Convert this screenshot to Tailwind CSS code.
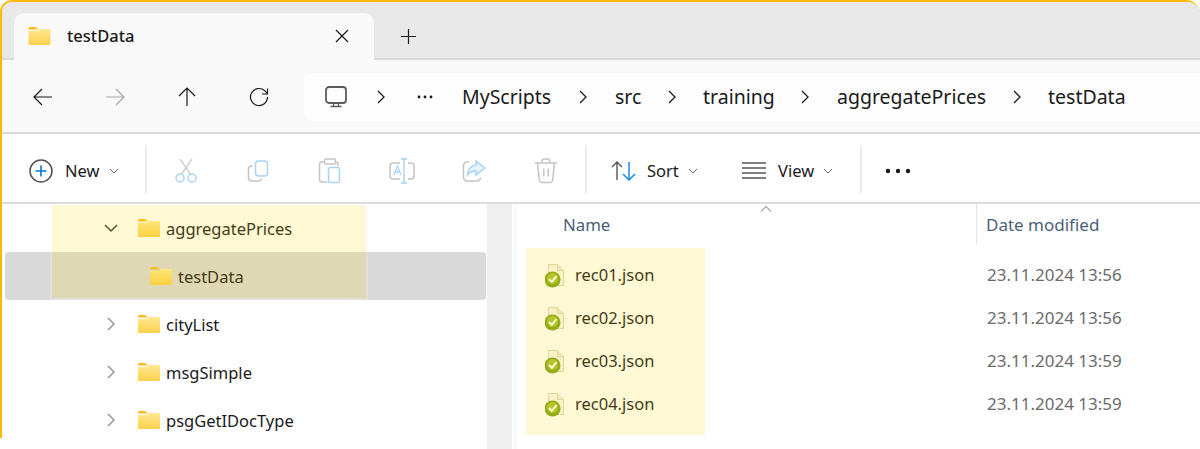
<!DOCTYPE html>
<html lang="en">
<head>
    <meta charset="UTF-8">
    <title>testData</title>
    <script src="https://cdn.jsdelivr.net/npm/@tailwindcss/browser@4"></script>
</head>
<body class="bg-white h-[449px] overflow-hidden font-['Noto_Sans',sans-serif] text-[#1a1a1a]">

    <!-- shared icons -->
    <svg class="absolute w-0 h-0">
        <defs>
            <linearGradient id="folderFill" x1="0" y1="0" x2="0" y2="1">
                <stop offset="0" stop-color="#fee98f"/>
                <stop offset="1" stop-color="#fdcf4c"/>
            </linearGradient>
        </defs>
        <symbol id="folder" viewBox="0 0 22 18">
            <path d="M0 1.500A1.500 1.500 0 0 1 1.500 0H7l3 2.500H0z" fill="#fbb91f"/>
            <path d="M0 4h9l2-2h10a1 1 0 0 1 1 1v14a1 1 0 0 1-1 1H1a1 1 0 0 1-1-1z" fill="url(#folderFill)"/>
        </symbol>
        <symbol id="jsonFile" viewBox="0 0 22 24">
            <path d="M3.500 0.500h9l6 6v15h-15z" fill="#f8f6ea" stroke="#dbd6be"/>
            <path d="M12.500 0.500v6h6" fill="#efebd8" stroke="#dbd6be"/>
            <circle cx="7.500" cy="15.500" r="8" fill="#7fa51a"/>
            <circle cx="7.500" cy="14.500" r="5.500" fill="#a3c233"/>
            <path d="M4 15l2.800 2.800 4.700-5.600" fill="none" stroke="#fff" stroke-width="2"/>
        </symbol>
        <symbol id="chevRight" viewBox="0 0 10 16">
            <path d="M2 2l6 6-6 6" fill="none" stroke="currentColor" stroke-width="1.300"/>
        </symbol>
        <symbol id="chevSmall" viewBox="0 0 10 6">
            <path d="M1 1l4 4 4-4" fill="none" stroke="currentColor" stroke-width="1"/>
        </symbol>
    </svg>

    <div class="relative h-[438px] border-t-2 border-l-2 border-[#ffb900] rounded-tl-[12px] rounded-tr-[14px]">
        <div class="h-[447px]">

            <!-- Tab strip -->
            <div class="h-[58px] bg-[#e8e8e8] border-b-2 border-[#d9d9d9] rounded-tl-[10px] rounded-tr-[12px] pl-[12px] pt-[11px] flex">
                <div class="w-[360px] h-[47px] bg-[#f9f9f9] rounded-t-[10px] flex items-center pl-[14px] pb-[1px]">
                    <svg class="w-[23px] h-[18px]"><use href="#folder"/></svg>
                    <span class="ml-[16px] w-[68px] text-[16.500px] font-medium">testData</span>
                    <svg class="ml-[200px]" width="14" height="14" viewBox="0 0 14 14"><path d="M1 1l12 12M13 1L1 13" stroke="#1a1a1a" stroke-width="1.200"/></svg>
                </div>
                <div class="w-[68px] h-[47px] flex items-center justify-center">
                    <svg width="15" height="15" viewBox="0 0 15 15"><path d="M7.500 0v15M0 7.500h15" stroke="#1a1a1a" stroke-width="1.200"/></svg>
                </div>
            </div>

            <!-- Navigation bar -->
            <div class="h-[74px] pt-[1px] bg-[#f9f9f9] border-b-2 border-[#d9d9d9] pl-[5px] flex items-center">
                <div class="w-[72px] flex justify-center">
                    <svg width="20" height="18" viewBox="0 0 20 18"><path d="M1 9h18M9 1L1 9l8 8" fill="none" stroke="#1a1a1a" stroke-width="1.200"/></svg>
                </div>
                <div class="w-[72px] flex justify-center">
                    <svg width="20" height="18" viewBox="0 0 20 18"><path d="M1 9h18M11 1l8 8-8 8" fill="none" stroke="#a6a6a6" stroke-width="1.200"/></svg>
                </div>
                <div class="w-[72px] flex justify-center">
                    <svg width="18" height="19" viewBox="0 0 18 19"><path d="M9 19V1M1 9l8-8 8 8" fill="none" stroke="#1a1a1a" stroke-width="1.200"/></svg>
                </div>
                <div class="w-[72px] flex justify-center">
                    <svg width="20" height="20" viewBox="0 0 20 20"><path d="M18.500 10a8.500 8.500 0 1 1-2.800-6.300L18.500 6.500M18.500 1.500v5.500h-5.500" fill="none" stroke="#1a1a1a" stroke-width="1.200"/></svg>
                </div>
                <div class="ml-[9px] w-[896px] h-[48px] bg-[#fdfdfd] rounded-l-[8px] flex items-center text-[19.500px]">
                    <div class="w-[64px] flex justify-center">
                        <svg width="24" height="22" viewBox="0 0 24 22"><rect x="2" y="1" width="20" height="16" rx="3" fill="none" stroke="#5c5c5c" stroke-width="1.800"/><path d="M9.500 17v3.500M14.500 17v3.500M6.500 20.500h11" fill="none" stroke="#5c5c5c" stroke-width="1.300"/></svg>
                    </div>
                    <div class="w-[26px] flex justify-center"><svg class="w-[10px] h-[16px]"><use href="#chevRight"/></svg></div>
                    <div class="w-[62px] flex justify-center">
                        <svg width="16" height="4" viewBox="0 0 16 4"><circle cx="2" cy="2" r="1.400" fill="#1a1a1a"/><circle cx="8" cy="2" r="1.400" fill="#1a1a1a"/><circle cx="14" cy="2" r="1.400" fill="#1a1a1a"/></svg>
                    </div>
                    <div class="w-[114px] pl-[6px]">MyScripts</div>
                    <div class="w-[26px] flex justify-center"><svg class="w-[10px] h-[16px]"><use href="#chevRight"/></svg></div>
                    <div class="w-[63px] pl-[19px]">src</div>
                    <div class="w-[26px] flex justify-center"><svg class="w-[10px] h-[16px]"><use href="#chevRight"/></svg></div>
                    <div class="w-[107px] pl-[18px]">training</div>
                    <div class="w-[26px] flex justify-center"><svg class="w-[10px] h-[16px]"><use href="#chevRight"/></svg></div>
                    <div class="w-[186px] pl-[19px]">aggregatePrices</div>
                    <div class="w-[26px] flex justify-center"><svg class="w-[10px] h-[16px]"><use href="#chevRight"/></svg></div>
                    <div class="pl-[18px]">testData</div>
                </div>
            </div>

            <!-- Command bar -->
            <div class="h-[70px] pt-[5px] bg-white border-b-2 border-[#dcdcdc] flex items-center text-[16.500px]">
                <div class="w-[143px] flex items-center pl-[27px]">
                    <svg width="24" height="24" viewBox="0 0 24 24"><circle cx="12" cy="12" r="11" fill="none" stroke="#505050" stroke-width="1.500"/><path d="M12 6.500v11M6.500 12h11" stroke="#0078d4" stroke-width="1.600"/></svg>
                    <span class="ml-[12px] pt-[2px]">New</span>
                    <svg class="ml-[9px] w-[10px] h-[6px] text-[#666]"><use href="#chevSmall"/></svg>
                </div>
                <div class="w-[2px] h-[48px] -mt-[3px] bg-[#ebebeb]"></div>
                <div class="w-[438px] flex items-center">
                    <div class="w-[76px] pl-[27px]">
                        <svg width="24" height="26" viewBox="0 0 24 26"><path d="M6 1l11 16M18 1L7 17" fill="none" stroke="#c4c4c4" stroke-width="1.300"/><circle cx="6" cy="20" r="4" fill="none" stroke="#a8d2f4" stroke-width="1.400"/><circle cx="18" cy="20" r="4" fill="none" stroke="#a8d2f4" stroke-width="1.400"/></svg>
                    </div>
                    <div class="w-[72px] pl-[23px]">
                        <svg width="24" height="24" viewBox="0 0 24 24"><rect x="9.500" y="2" width="12" height="15" rx="3" fill="none" stroke="#a8d2f4" stroke-width="1.500"/><path d="M6.500 7H5.500a3 3 0 0 0-3 3v9a3 3 0 0 0 3 3h7a3 3 0 0 0 3-2.500" fill="none" stroke="#c4c4c4" stroke-width="1.500"/></svg>
                    </div>
                    <div class="w-[72px] pl-[23px]">
                        <svg width="24" height="26" viewBox="0 0 24 26"><path d="M6 4H4a2.500 2.500 0 0 0-2.500 2.500v15A2.500 2.500 0 0 0 4 24h5" fill="none" stroke="#c4c4c4" stroke-width="1.500"/><path d="M17 4h.5a2.500 2.500 0 0 1 2.500 2.500V8" fill="none" stroke="#c4c4c4" stroke-width="1.500"/><rect x="6.500" y="1" width="11" height="5" rx="1.500" fill="none" stroke="#c4c4c4" stroke-width="1.500"/><rect x="10.500" y="9.500" width="11" height="15" rx="2" fill="none" stroke="#a8d2f4" stroke-width="1.500"/></svg>
                    </div>
                    <div class="w-[72px] pl-[22px]">
                        <svg width="26" height="26" viewBox="0 0 26 26"><path d="M11 5H4a3 3 0 0 0-3 3v10a3 3 0 0 0 3 3h7M19 5h3a3 3 0 0 1 3 3v10a3 3 0 0 1-3 3h-3" fill="none" stroke="#c4c4c4" stroke-width="1.500"/><path d="M12 1h3M12 25h3M15 1v24M15 1h3M15 25h3" fill="none" stroke="#a8d2f4" stroke-width="1.400"/><path d="M5 17l3.500-9 3.500 9M6.300 14h4.400" fill="none" stroke="#a8d2f4" stroke-width="1.300"/></svg>
                    </div>
                    <div class="w-[72px] pl-[23px]">
                        <svg width="24" height="24" viewBox="0 0 24 24"><path d="M7 3H5a3.500 3.500 0 0 0-3.500 3.500v12A3.500 3.500 0 0 0 5 22h10a3.500 3.500 0 0 0 3.500-3.500" fill="none" stroke="#c4c4c4" stroke-width="1.500"/><path d="M14 2l9 7-9 7v-4c-4 0-6 1-8.500 4C6 10 9 6.500 14 6z" fill="#e6f2fc" stroke="#a8d2f4" stroke-width="1.400"/></svg>
                    </div>
                    <div class="w-[74px] pl-[23px]">
                        <svg width="24" height="26" viewBox="0 0 24 26"><path d="M1 5h22M8 5V3.500A2.500 2.500 0 0 1 10.500 1h3A2.500 2.500 0 0 1 16 3.500V5M3.500 5l1.800 17a3 3 0 0 0 3 2.500h7.400a3 3 0 0 0 3-2.500L20.500 5M9.800 10.500v8M14.200 10.500v8" fill="none" stroke="#c4c4c4" stroke-width="1.500"/></svg>
                    </div>
                </div>
                <div class="w-[2px] h-[48px] -mt-[3px] bg-[#ebebeb]"></div>
                <div class="w-[155px] flex items-center pl-[24px]">
                    <svg width="25" height="20" viewBox="0 0 25 20"><path d="M6 19V1M1 6l5-5 5 5" fill="none" stroke="#555" stroke-width="1.400"/><path d="M18 1v18M12 13l6 6 6-6" fill="none" stroke="#1e88e5" stroke-width="1.500"/></svg>
                    <span class="ml-[11px] pt-[2px]">Sort</span>
                    <svg class="ml-[9px] w-[10px] h-[6px] text-[#666]"><use href="#chevSmall"/></svg>
                </div>
                <div class="w-[118px] flex items-center">
                    <svg width="24" height="17" viewBox="0 0 24 17"><path d="M0 1h24M0 6h24M0 11h24M0 16h24" stroke="#555" stroke-width="1.400"/></svg>
                    <span class="ml-[12px] pt-[2px]">View</span>
                    <svg class="ml-[9px] w-[10px] h-[6px] text-[#666]"><use href="#chevSmall"/></svg>
                </div>
                <div class="w-[2px] h-[48px] -mt-[3px] bg-[#ebebeb]"></div>
                <div class="ml-[23px]">
                    <svg width="26" height="6" viewBox="0 0 26 6"><circle cx="3" cy="3" r="2.200" fill="#1a1a1a"/><circle cx="13" cy="3" r="2.200" fill="#1a1a1a"/><circle cx="23" cy="3" r="2.200" fill="#1a1a1a"/></svg>
                </div>
            </div>

            <!-- Content -->
            <div class="flex h-[245px] text-[16.500px] overflow-hidden">

                <!-- Tree -->
                <div class="relative w-[485px]">
                    <div class="h-[48px] flex items-center">
                        <svg class="ml-[102px] w-[14px] h-[9px]" viewBox="0 0 14 9"><path d="M1 1l6 6 6-6" fill="none" stroke="#3a3a3a" stroke-width="1.500"/></svg>
                        <svg class="ml-[20px] w-[22px] h-[18px]"><use href="#folder"/></svg>
                        <span class="ml-[6px] pt-[2px]">aggregatePrices</span>
                    </div>
                    <div class="h-[48px] ml-[3px] mr-[1px] bg-[#d9d9d9] rounded-[4px] flex items-center">
                        <svg class="ml-[145px] w-[22px] h-[18px]"><use href="#folder"/></svg>
                        <span class="ml-[6px] pt-[2px]">testData</span>
                    </div>
                    <div class="h-[48px] flex items-center">
                        <svg class="ml-[104px] w-[10px] h-[16px] text-[#8a8a8a]"><use href="#chevRight"/></svg>
                        <svg class="ml-[22px] w-[22px] h-[18px]"><use href="#folder"/></svg>
                        <span class="ml-[6px] pt-[2px]">cityList</span>
                    </div>
                    <div class="h-[48px] flex items-center">
                        <svg class="ml-[104px] w-[10px] h-[16px] text-[#8a8a8a]"><use href="#chevRight"/></svg>
                        <svg class="ml-[22px] w-[22px] h-[18px]"><use href="#folder"/></svg>
                        <span class="ml-[6px] pt-[2px]">msgSimple</span>
                    </div>
                    <div class="h-[48px] flex items-center">
                        <svg class="ml-[104px] w-[10px] h-[16px] text-[#8a8a8a]"><use href="#chevRight"/></svg>
                        <svg class="ml-[22px] w-[22px] h-[18px]"><use href="#folder"/></svg>
                        <span class="ml-[6px] pt-[2px]">psgGetIDocType</span>
                    </div>
                    <!-- marker over the tree -->
                    <div class="absolute left-[50px] top-[1px] w-[314px] h-[93px] bg-[#ffd400]/[.165] shadow-[0_0_0_2px_rgba(255,255,255,0.2)]"></div>
                </div>

                <!-- Scrollbar track -->
                <div class="w-[25px] bg-[#efefef]"></div>
                <div class="ml-[2px] w-[2px] bg-[#f6f6f6]"></div>

                <!-- File list -->
                <div class="relative flex-1">
                    <div class="h-[43px] flex text-[#4c6078]">
                        <div class="w-[461px] h-[41px] border-r border-[#e5e5e5] pl-[47px] pt-[8px] text-[16.800px]">Name</div>
                        <div class="pl-[9px] pt-[8px] text-[17px]">Date modified</div>
                    </div>
                    <svg class="absolute left-[244px] top-[2px]" width="12" height="6" viewBox="0 0 12 6"><path d="M1 5.500l5-5 5 5" fill="none" stroke="#666" stroke-width="1"/></svg>
                    <div class="pt-[7px]">
                        <div class="h-[43px] flex items-center pl-[29px]">
                            <svg class="w-[22px] h-[24px]"><use href="#jsonFile"/></svg>
                            <span class="ml-[8px] w-[412px]">rec01.json</span>
                            <span class="-mt-[2px] text-[17px] text-[#6b6b6b]">23.11.2024 13:56</span>
                        </div>
                        <div class="h-[43px] flex items-center pl-[29px]">
                            <svg class="w-[22px] h-[24px]"><use href="#jsonFile"/></svg>
                            <span class="ml-[8px] w-[412px]">rec02.json</span>
                            <span class="-mt-[2px] text-[17px] text-[#6b6b6b]">23.11.2024 13:56</span>
                        </div>
                        <div class="h-[43px] flex items-center pl-[29px]">
                            <svg class="w-[22px] h-[24px]"><use href="#jsonFile"/></svg>
                            <span class="ml-[8px] w-[412px]">rec03.json</span>
                            <span class="-mt-[2px] text-[17px] text-[#6b6b6b]">23.11.2024 13:59</span>
                        </div>
                        <div class="h-[43px] flex items-center pl-[29px]">
                            <svg class="w-[22px] h-[24px]"><use href="#jsonFile"/></svg>
                            <span class="ml-[8px] w-[412px]">rec04.json</span>
                            <span class="-mt-[2px] text-[17px] text-[#6b6b6b]">23.11.2024 13:59</span>
                        </div>
                    </div>
                    <!-- marker over the files -->
                    <div class="absolute left-[10px] top-[44px] w-[179px] h-[187px] bg-[#ffd400]/[.165]"></div>
                </div>
            </div>
        </div>
    </div>

</body>
</html>
